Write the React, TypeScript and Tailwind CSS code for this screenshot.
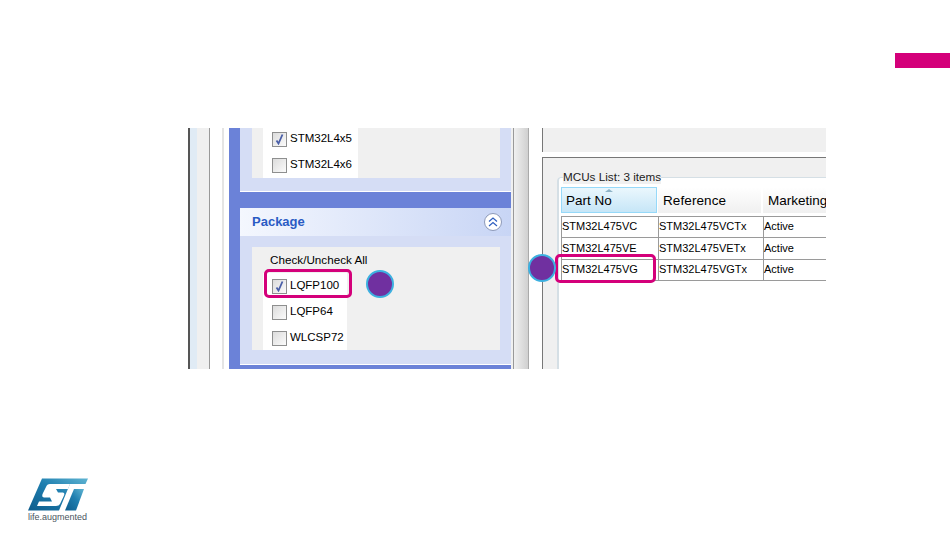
import React from 'react'

const rows = [
  { part: 'STM32L475VC', ref: 'STM32L475VCTx', h: 'h-[21px]' },
  { part: 'STM32L475VE', ref: 'STM32L475VETx', h: 'h-[22px]' },
  { part: 'STM32L475VG', ref: 'STM32L475VGTx', h: 'h-[21px]' },
]

function CheckRow({ label, checked = false }: { label: string; checked?: boolean }) {
  return (
    <div className="flex h-[26px] shrink-0 items-center pl-[9px]">
      <div className="flex h-[15px] w-[15px] items-center justify-center border border-[#8e8f8f] bg-gradient-to-br from-[#dcdcdc] to-[#fbfbfb]">
        {checked && (
          <svg width="11" height="12" viewBox="0 0 11 12" fill="none">
            <path d="M2.5 7.5 L4.5 10.5 L8.5 1.5" stroke="#4a5fa8" strokeWidth="1.8" />
          </svg>
        )}
      </div>
      <span className="ml-[3px] text-[11.5px] text-black">{label}</span>
    </div>
  )
}

function CollapseIcon() {
  return (
    <div className="flex h-[18px] w-[18px] items-center justify-center rounded-full border border-[#8d99b8] bg-white">
      <svg width="12" height="12" viewBox="0 0 12 12" fill="none" stroke="#2f5fc0" strokeWidth="1.2">
        <path d="M2 5.5 L6 2 L10 5.5" />
        <path d="M2 10 L6 6.5 L10 10" />
      </svg>
    </div>
  )
}

function SidePanel() {
  return (
    <div className="flex w-[271px] shrink-0 flex-col bg-[#6b82d8]">
      <div className="h-[64px] shrink-0 border-b border-white bg-[#d5ddf5] pl-[12px] pr-[11px]">
        <div className="flex h-[50px] flex-col justify-end overflow-hidden bg-[#f0f0f0] pl-[11px]">
          <div className="w-[95px] bg-white">
            <CheckRow label="STM32L4x5" checked />
            <CheckRow label="STM32L4x6" />
          </div>
        </div>
      </div>
      <div className="mt-[16px] flex h-[28px] shrink-0 items-center justify-between bg-gradient-to-r from-[#f4f7fe] to-[#c8d5f5] pl-[12px] pr-[9px]">
        <span className="text-[13px] font-bold text-[#2a5bc4]">Package</span>
        <CollapseIcon />
      </div>
      <div className="h-[129px] shrink-0 border-b border-white bg-[#d5ddf5] pl-[12px] pr-[11px] pt-[11px]">
        <div className="h-[103px] overflow-hidden bg-[#f0f0f0] pl-[11px]">
          <div className="flex h-[26px] items-center pb-[1px] pl-[7px] text-[11.7px] text-black">Check/Uncheck All</div>
          <div className="w-[84px] bg-white">
            <CheckRow label="LQFP100" checked />
            <CheckRow label="LQFP64" />
            <CheckRow label="WLCSP72" />
          </div>
        </div>
      </div>
    </div>
  )
}

function McuTable() {
  return (
    <div className="w-[265px] text-black">
      <div className="flex h-[26px]">
        <div className="relative flex w-[96px] shrink-0 items-center border border-[#96d9f9] bg-gradient-to-b from-[#eaf7fd] to-[#c6e6f7] pl-[4px] pt-[3px] text-[13.5px]">
          Part No
          <div className="absolute left-[43px] top-[1px] h-0 w-0 border-x-[4px] border-b-[3px] border-x-transparent border-b-[#8fb4c8]" />
        </div>
        <div className="ml-[1px] flex w-[103px] shrink-0 items-center bg-gradient-to-b from-white to-[#f0f0f0] pl-[5px] pt-[3px] text-[13.5px] tracking-[0.1px]">
          Reference
        </div>
        <div className="ml-[2px] flex flex-1 items-center bg-gradient-to-b from-white to-[#f0f0f0] pl-[5px] pt-[3px] text-[13.5px]">
          Marketing
        </div>
      </div>
      <div className="mt-[3px] border-t border-[#9a9a9a] text-[11px]">
        {rows.map((row) => (
          <div key={row.part} className={`flex border-b border-[#9a9a9a] ${row.h}`}>
            <div className="flex w-[97px] shrink-0 items-center border-l border-[#9a9a9a] pb-[1px]">{row.part}</div>
            <div className="flex w-[105px] shrink-0 items-center border-l border-[#9a9a9a] pb-[1px]">{row.ref}</div>
            <div className="flex flex-1 items-center border-l border-[#9a9a9a] pb-[1px]">Active</div>
          </div>
        ))}
      </div>
    </div>
  )
}

function RightPanel() {
  return (
    <div className="flex w-[284px] shrink-0 flex-col">
      <div className="h-[24px] shrink-0 border-l border-[#777] bg-[#f0f0f0]" />
      <div className="h-[5px] shrink-0" />
      <div className="flex-1 border-l border-t border-[#777] bg-[#f0f0f0] pl-[14px] pt-[12px]">
        <fieldset className="h-[220px] rounded-tl-[4px] border-l-2 border-t border-[#d5dfe5] bg-white pl-[2px]">
          <legend className="ml-[2px] bg-[#f0f0f0] text-[11.7px] leading-[14px] text-[#222]">MCUs List: 3 items</legend>
          <div className="pt-[3px]">
            <McuTable />
          </div>
        </fieldset>
      </div>
    </div>
  )
}

function Badge({ className }: { className: string }) {
  return <div className={`absolute h-[28px] w-[28px] rounded-full border-2 border-[#3cb0e0] bg-[#7030a0] ${className}`} />
}

function Highlight({ className }: { className: string }) {
  return <div className={`absolute rounded-[5px] border-[3px] border-[#d4007a] ${className}`} />
}

function StLogo() {
  return (
    <div className="ml-[28px] mt-[109px] flex w-[62px] flex-col">
      <svg width="60" height="33" viewBox="0 0 60 33">
        <defs>
          <linearGradient id="st" x1="0" y1="1" x2="1" y2="0">
            <stop offset="0" stopColor="#0d5c8c" />
            <stop offset="0.55" stopColor="#1f7fb0" />
            <stop offset="1" stopColor="#5fb4d2" />
          </linearGradient>
        </defs>
        <path d="M14 0.5 H60 L57.5 6 H42 L31 32.5 H0 Z" fill="url(#st)" />
        <path d="M48 32.5 H37 L46 11 H56 Z" fill="url(#st)" />
        <path d="M22 6 H42 L40 11 H28 L30 14.5 H35 Q37 15 36 17.5 L32 26 Q31 28 28 28 H9 L11 23.5 H24 L22 19.5 H16 Q13 19 15 15 L18 9 Q19 6 22 6 Z" fill="#fff" />
      </svg>
      <span className="mt-[1px] whitespace-nowrap text-[9px] leading-[10px] text-[#4a5560]">life.augmented</span>
    </div>
  )
}

export default function App() {
  return (
    <div className="relative h-[535px] w-[950px] overflow-hidden bg-white font-['Liberation_Sans',sans-serif]">
      <div className="flex justify-end pt-[53px]">
        <div className="h-[15px] w-[55px] bg-[#d4007a]" />
      </div>

      <div className="relative ml-[188px] mt-[60px] flex h-[241px] w-[638px] overflow-hidden">
        <div className="w-[2px] shrink-0 bg-[#555]" />
        <div className="w-[7px] shrink-0 bg-[#e0ebf5]" />
        <div className="w-[12px] shrink-0 bg-[#f0f0f0]" />
        <div className="w-[1px] shrink-0 bg-[#999]" />
        <div className="w-[12px] shrink-0 bg-white" />
        <div className="w-[2px] shrink-0 bg-[#e4e4e4]" />
        <div className="w-[5px] shrink-0 bg-white" />
        <div className="w-[11px] shrink-0 bg-[#6b82d8]" />
        <SidePanel />
        <div className="w-[2px] shrink-0 bg-[#f0f0f0]" />
        <div className="w-[1px] shrink-0 bg-[#999]" />
        <div className="w-[14px] shrink-0 bg-gradient-to-r from-[#f0f0f0] to-[#d0d0d0]" />
        <div className="w-[1px] shrink-0 bg-[#aaa]" />
        <div className="w-[13px] shrink-0 bg-white" />
        <RightPanel />

        <Highlight className="left-[76px] top-[141px] h-[29px] w-[88px]" />
        <Badge className="left-[178px] top-[142px]" />
        <Highlight className="left-[367px] top-[126px] h-[29px] w-[101px]" />
        <Badge className="left-[340px] top-[126px]" />
      </div>

      <StLogo />
    </div>
  )
}
